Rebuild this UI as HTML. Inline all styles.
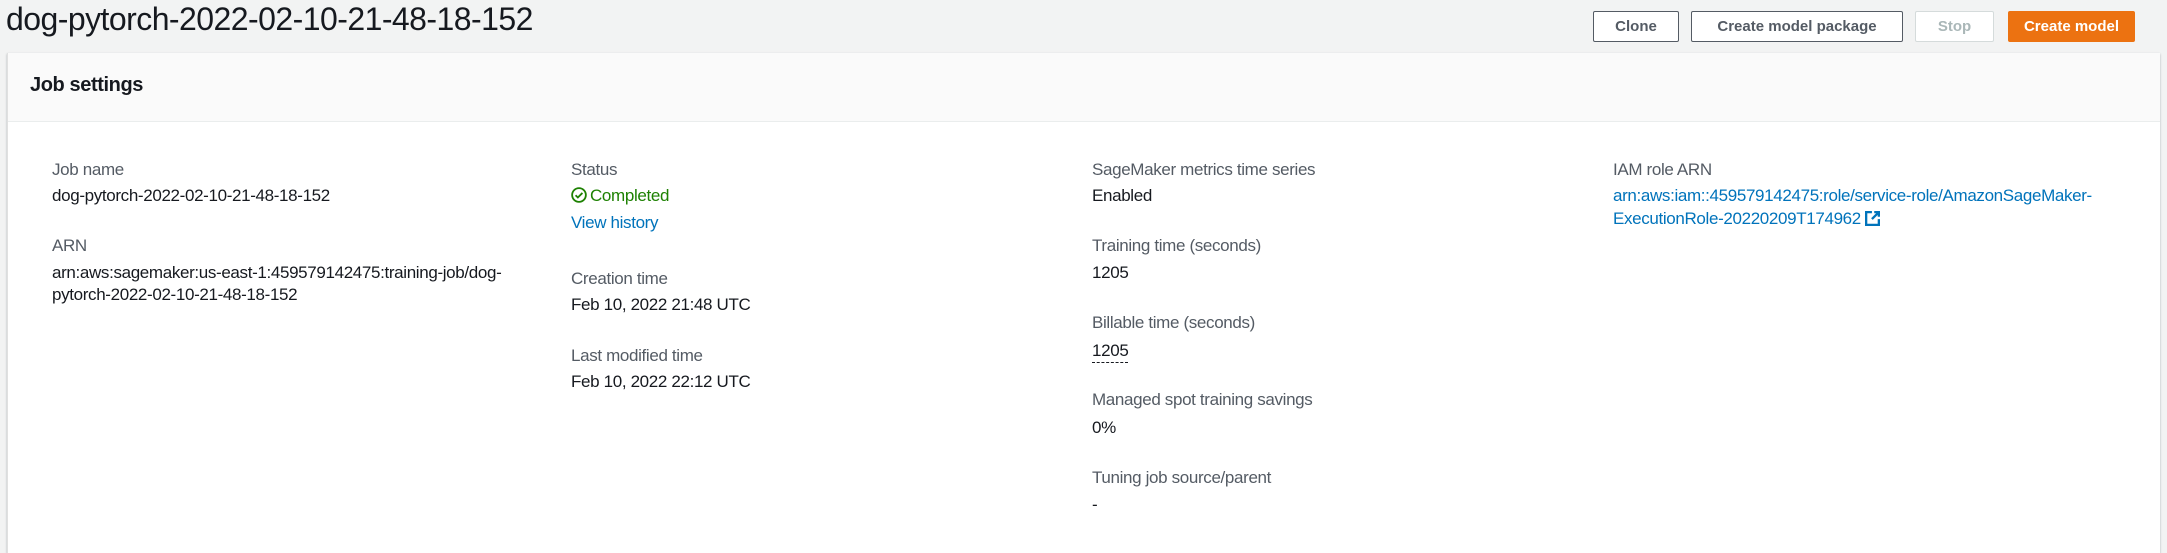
<!DOCTYPE html>
<html><head><meta charset="utf-8"><style>
*{margin:0;padding:0;box-sizing:border-box}
body{width:2167px;height:540px;background:#f2f3f3;font-family:"Liberation Sans",sans-serif;color:#16191f;position:relative;overflow:hidden;font-size:17px;letter-spacing:-0.35px}
.a{position:absolute;white-space:nowrap;line-height:20px;margin-top:1px}
h1{position:absolute;left:6px;top:1px;font-size:32px;font-weight:normal;letter-spacing:-0.55px}
.btn{position:absolute;top:11px;height:31px;border:1px solid #545b64;border-radius:2px;background:#fff;font-weight:bold;font-size:15px;color:#545b64;text-align:center;line-height:29px;letter-spacing:0}
.panel{position:absolute;left:7px;top:53px;width:2153px;height:500px;background:#fff;box-shadow:0 1px 2px rgba(0,28,36,.3);border-left:1px solid #e0e0e0}
.hdr{height:69px;background:#fafafa;border-bottom:1px solid #eaeded}
.l{color:#545b64}
.link{color:#0073bb}
</style></head><body>
<h1>dog-pytorch-2022-02-10-21-48-18-152</h1>
<div class="btn" style="left:1593px;width:86px">Clone</div>
<div class="btn" style="left:1691px;width:212px">Create model package</div>
<div class="btn" style="left:1915px;width:79px;border-color:#d5dbdb;color:#aab7b8">Stop</div>
<div class="btn" style="left:2008px;width:127px;background:#ec7211;border-color:#ec7211;color:#fff">Create model</div>
<div class="panel"><div class="hdr"></div></div>
<div class="a" style="left:30px;top:73px;font-size:20px;line-height:22px;font-weight:bold;letter-spacing:-0.4px">Job settings</div>

<div class="a l" style="left:52px;top:159px">Job name</div>
<div class="a" style="left:52px;top:185px">dog-pytorch-2022-02-10-21-48-18-152</div>
<div class="a l" style="left:52px;top:235px">ARN</div>
<div class="a" style="left:52px;top:262px">arn:aws:sagemaker:us-east-1:459579142475:training-job/dog-</div>
<div class="a" style="left:52px;top:284px">pytorch-2022-02-10-21-48-18-152</div>

<div class="a l" style="left:571px;top:159px">Status</div>
<div class="a" style="left:571px;top:185px;color:#1d8102"><svg width="16" height="16" viewBox="0 0 14 14" style="vertical-align:-2px;margin-right:3px"><circle cx="7" cy="7" r="6" fill="none" stroke="#1d8102" stroke-width="1.6"/><path d="M4 7.2l2 2 4-4" fill="none" stroke="#1d8102" stroke-width="1.6"/></svg>Completed</div>
<div class="a link" style="left:571px;top:212px">View history</div>
<div class="a l" style="left:571px;top:268px">Creation time</div>
<div class="a" style="left:571px;top:294px">Feb 10, 2022 21:48 UTC</div>
<div class="a l" style="left:571px;top:345px">Last modified time</div>
<div class="a" style="left:571px;top:371px">Feb 10, 2022 22:12 UTC</div>

<div class="a l" style="left:1092px;top:159px">SageMaker metrics time series</div>
<div class="a" style="left:1092px;top:185px">Enabled</div>
<div class="a l" style="left:1092px;top:235px">Training time (seconds)</div>
<div class="a" style="left:1092px;top:262px">1205</div>
<div class="a l" style="left:1092px;top:312px">Billable time (seconds)</div>
<div class="a" style="left:1092px;top:340px;border-bottom:1px dashed #16191f;padding-bottom:1px">1205</div>
<div class="a l" style="left:1092px;top:389px">Managed spot training savings</div>
<div class="a" style="left:1092px;top:417px">0%</div>
<div class="a l" style="left:1092px;top:467px">Tuning job source/parent</div>
<div class="a" style="left:1092px;top:494px">-</div>

<div class="a l" style="left:1613px;top:159px">IAM role ARN</div>
<div class="a link" style="left:1613px;top:185px">arn:aws:iam::459579142475:role/service-role/AmazonSageMaker-</div>
<div class="a link" style="left:1613px;top:208px">ExecutionRole-20220209T174962 <svg width="15" height="15" viewBox="0 0 13 13" style="vertical-align:-2px"><path d="M6 1H1v11h11V7" fill="none" stroke="#0073bb" stroke-width="2"/><path d="M8 1h4v4M12 1L6 7" fill="none" stroke="#0073bb" stroke-width="2"/></svg></div>
</body></html>
